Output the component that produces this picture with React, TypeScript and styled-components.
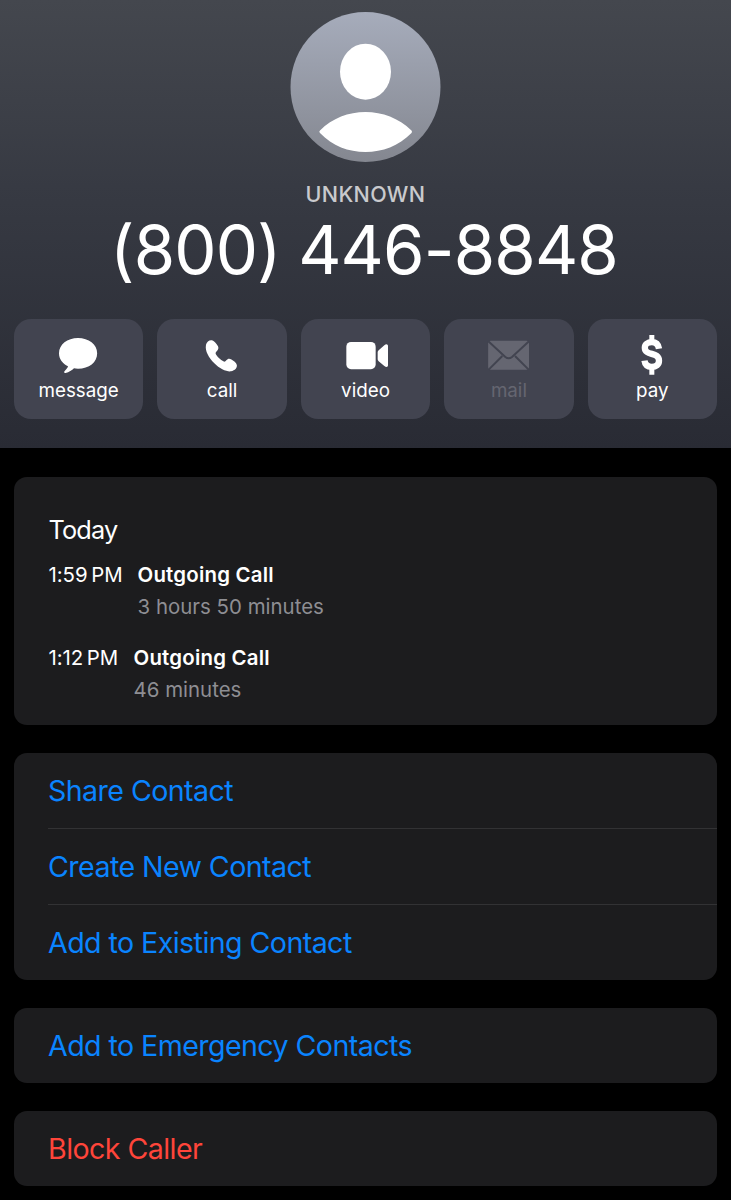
import React from "react";
import styled, { createGlobalStyle } from "styled-components";

const GlobalStyle = createGlobalStyle`
  *, *::before, *::after { box-sizing: border-box; }
  body {
    margin: 0;
    background: #000;
    color: #fff;
    font-family: Inter, "Liberation Sans", sans-serif;
    font-feature-settings: "calt" 0;
  }
`;

const Page = styled.main`
  width: 731px;
  height: 1200px;
  overflow: hidden;
  background: #000;
`;

const Header = styled.header`
  display: flex;
  flex-direction: column;
  align-items: center;
  height: 448px;
  padding: 12px 14px 0;
  background: linear-gradient(#44474e 0%, #363942 45%, #292b34 100%);
`;

const Avatar = styled.svg`
  display: block;
  width: 151px;
  height: 150px;
  flex: none;
`;

const Label = styled.div`
  margin-top: 20px;
  font-size: 21.5px;
  font-weight: 500;
  line-height: 24px;
  letter-spacing: 0.35px;
  color: #c9cacd;
`;

const PhoneNumber = styled.h1`
  margin: 4px 0 0;
  padding-right: 3px;
  font-size: 67px;
  font-weight: 400;
  line-height: 80px;
  letter-spacing: -0.85px;
  word-spacing: -0.5px;
  white-space: nowrap;
`;

const Actions = styled.div`
  display: grid;
  grid-template-columns: repeat(5, 1fr);
  column-gap: 14.2px;
  width: 100%;
  margin-top: 29px;
`;

const ActionButton = styled.button`
  display: flex;
  flex-direction: column;
  align-items: center;
  height: 99.5px;
  padding: 16px 0 0;
  border: 0;
  border-radius: 17px;
  background: #424450;
  color: ${(p) => (p.disabled ? "#656671" : "#fff")};
  font-family: inherit;
`;

const ActionIcon = styled.svg`
  display: block;
  width: 48px;
  height: 40px;
  fill: currentColor;
`;

const ActionText = styled.span`
  margin-top: 4px;
  font-size: 18.8px;
  line-height: 24px;
  letter-spacing: 0;
`;

const Content = styled.div`
  display: flex;
  flex-direction: column;
  gap: 27.6px;
  padding: 29px 14px 0;
`;

const Card = styled.section`
  border-radius: 13px;
  background: #1c1c1e;
  overflow: hidden;
`;

const HistoryCard = styled(Card)`
  height: 248.3px;
  padding: 37px 34.5px 0;
`;

const Day = styled.h2`
  margin: 0;
  font-size: 25.3px;
  font-weight: 400;
  line-height: 32px;
  letter-spacing: -0.85px;
`;

const Call = styled.div<{ $top: number }>`
  display: flex;
  margin-top: ${(p) => p.$top}px;
  font-size: 20.4px;
  line-height: 31.5px;
`;

const Time = styled.span<{ $width: number }>`
  width: ${(p) => p.$width}px;
  letter-spacing: -0.05px;
  white-space: nowrap;
`;

const CallKind = styled.div`
  font-weight: 600;
  letter-spacing: 0.22px;
`;

const Duration = styled.div`
  color: #8e8e93;
  letter-spacing: 0.03px;
`;

const Row = styled.div<{ $danger?: boolean; $divider?: boolean }>`
  height: ${(p) => (p.$divider ? 76 : 75.4)}px;
  margin-left: 34px;
  border-bottom: ${(p) => (p.$divider ? "1px solid #323234" : "0")};
  color: ${(p) => (p.$danger ? "#ff453a" : "#0a84ff")};
  font-size: 28.6px;
  line-height: 76.6px;
  letter-spacing: -0.57px;
`;

const MessageIcon = () => (
  <ActionIcon viewBox="165 90 144 120">
    <path d="M234 99C266 99 291.500 118 291.500 144.500C291.500 172 267 191 234 191C229 191 225 190.500 222 190C216 196 207 202 197 204C192 205 191 201 194 198C199 193 203 189 204 184C188 176 177 163 177 145C177 118 202 99 234 99Z" />
  </ActionIcon>
);

const CallIcon = () => (
  <ActionIcon viewBox="595 90 144 120">
    <path d="M619 119C621 110 630 104 637 106C643 107 649 115 655 124C658 130 655 135 651 139C647 143 647 146 650 150C656 158 662 164 671 169C675 171 677 170 680 166C684 161 689 160 694 163C702 168 710 173 711.500 180C713 189 706 196 694 199C682 201 660 192 644 175C628 158 615 138 619 119Z" />
  </ActionIcon>
);

const VideoIcon = () => (
  <ActionIcon viewBox="156 90 144 120">
    <rect x="169" y="111" width="88" height="81.500" rx="14" />
    <path d="M263 141Q263 138 266 135.500L283 120.500C289 115.500 294 118 294 123V181C294 186 289 188 283 183L266 169Q263 166.500 263 163Z" />
  </ActionIcon>
);

const MailIcon = () => (
  <ActionIcon viewBox="585 90 144 120">
    <rect x="594.500" y="107.500" width="122.500" height="86.500" rx="8" />
    <g fill="none" stroke="#424450" strokeWidth="6">
      <path d="M595 109L646 156Q656 164 666 156L717 109" />
      <path d="M596 194L637 153M716 194L675 153" />
    </g>
  </ActionIcon>
);

const PayIcon = () => (
  <ActionIcon viewBox="205 90 144 120">
    <path
      d="M298 131C296 118 288 111.500 276.500 111.500C264 111.500 255.500 118 255.500 128C255.500 154 298 139 298 167C298 179 289 185.500 276.500 185.500C264 185.500 256 179 254.500 167"
      fill="none"
      stroke="currentColor"
      strokeWidth="19"
    />
    <path d="M269 90H284V112H269ZM269 186H284V209H269Z" />
  </ActionIcon>
);

const actions = [
  { name: "message", icon: <MessageIcon /> },
  { name: "call", icon: <CallIcon /> },
  { name: "video", icon: <VideoIcon /> },
  { name: "mail", icon: <MailIcon />, disabled: true },
  { name: "pay", icon: <PayIcon /> },
];

export default function App() {
  return (
    <Page>
      <GlobalStyle />
      <Header>
        <Avatar viewBox="-0.5 0 151 150">
          <defs>
            <linearGradient id="avatar" x1="0" y1="0" x2="0" y2="1">
              <stop offset="0" stopColor="#a6acbb" />
              <stop offset="1" stopColor="#848790" />
            </linearGradient>
          </defs>
          <circle cx="75" cy="75" r="75" fill="url(#avatar)" />
          <ellipse cx="75" cy="59.700" rx="25.500" ry="28" fill="#fff" />
          <path
            d="M29.500 118.500C42 106 58 100 75 100C92 100 108 106 121 118.500Q122 119.700 121 121C108 134 92 140 75 140C58 140 42 134 29.500 121Q28 119.700 29.500 118.500Z"
            fill="#fff"
          />
        </Avatar>
        <Label>UNKNOWN</Label>
        <PhoneNumber>(800) 446-8848</PhoneNumber>
        <Actions>
          {actions.map((a) => (
            <ActionButton key={a.name} disabled={a.disabled}>
              {a.icon}
              <ActionText>{a.name}</ActionText>
            </ActionButton>
          ))}
        </Actions>
      </Header>
      <Content>
        <HistoryCard>
          <Day>Today</Day>
          <Call $top={13}>
            <Time $width={89}>1:59{"\u2009"}PM</Time>
            <div>
              <CallKind>Outgoing Call</CallKind>
              <Duration>3 hours 50 minutes</Duration>
            </div>
          </Call>
          <Call $top={20}>
            <Time $width={85}>1:12{"\u2009"}PM</Time>
            <div>
              <CallKind>Outgoing Call</CallKind>
              <Duration>46 minutes</Duration>
            </div>
          </Call>
        </HistoryCard>
        <Card>
          <Row $divider>Share Contact</Row>
          <Row $divider>Create New Contact</Row>
          <Row>Add to Existing Contact</Row>
        </Card>
        <Card>
          <Row>Add to Emergency Contacts</Row>
        </Card>
        <Card>
          <Row $danger>Block Caller</Row>
        </Card>
      </Content>
    </Page>
  );
}
